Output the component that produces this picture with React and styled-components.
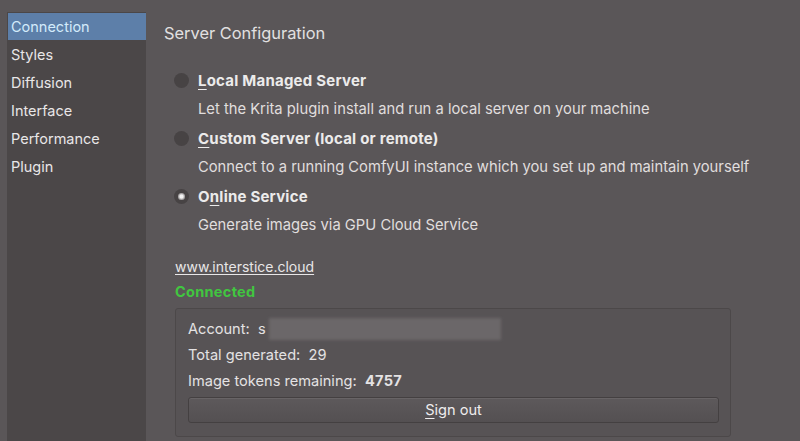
import React, { useState } from "react";
import styled, { createGlobalStyle } from "styled-components";

const GlobalStyle = createGlobalStyle`
  html, body {
    margin: 0;
    padding: 0;
    background: #5a5658;
  }
  body {
    font-family: "Inter", "Liberation Sans", sans-serif;
    color: #e4e2e3;
  }
`;

const Window = styled.div`
  width: 800px;
  height: 441px;
  display: flex;
  background: #5a5658;
  overflow: hidden;
`;

const Sidebar = styled.ul`
  list-style: none;
  margin: 12px 14px 0 7px;
  padding: 1px 0 0 1px;
  width: 138px;
  flex-shrink: 0;
  background: #4b4748;
`;

const NavItem = styled.li`
  height: 27px;
  margin-bottom: 1px;
  padding-left: 3px;
  display: flex;
  align-items: center;
  font-size: 14.5px;
  color: ${({ active }) => (active ? "#d3ebfb" : "#e8e6e7")};
  background: ${({ active }) => (active ? "#5d7fa9" : "transparent")};
`;

const Content = styled.div`
  flex: 1;
  padding: 23px 0 4px 4px;
  display: flex;
  flex-direction: column;
`;

const Title = styled.h2`
  margin: 0;
  font-size: 16.4px;
  font-weight: 400;
  line-height: 20px;
  color: #e2e0e1;
`;

const Options = styled.div`
  margin: 23px 0 0 10px;
  display: flex;
  flex-direction: column;
`;

const OptionRow = styled.label`
  display: flex;
  align-items: center;
  gap: 9px;
  height: 29px;
`;

const Radio = styled.span`
  width: 15px;
  height: 15px;
  border-radius: 50%;
  background: #474344;
  display: flex;
  align-items: center;
  justify-content: center;
  &::after {
    content: "";
    display: ${({ checked }) => (checked ? "block" : "none")};
    width: 7px;
    height: 7px;
    border-radius: 50%;
    background: radial-gradient(circle, #f2f2f2 0 30%, #a9a6a7 60%);
  }
`;

const OptionLabel = styled.span`
  font-size: 15px;
  font-weight: 700;
  letter-spacing: 0.22px;
  color: #ecebeb;
`;

const Mnemonic = styled.u`
  text-decoration-thickness: 1px;
  text-underline-offset: 3px;
`;

const Description = styled.div`
  height: 29px;
  line-height: 29px;
  padding-left: 24px;
  font-size: 14.75px;
  color: #e0dede;
`;

const Link = styled.a`
  margin: 18px 0 0 11px;
  font-size: 14px;
  line-height: 18px;
  color: #e8e6e7;
  text-decoration: underline;
  text-underline-offset: 2px;
  align-self: flex-start;
`;

const Status = styled.div`
  margin: 7px 0 0 11px;
  font-size: 14.5px;
  line-height: 18px;
  font-weight: 700;
  letter-spacing: 0.3px;
  color: #41c640;
`;

const GroupBox = styled.div`
  box-sizing: border-box;
  margin: 7px 0 0 11px;
  width: 556px;
  flex: 1;
  border: 1px solid #4c4849;
  border-radius: 3px;
  background: #575355;
  padding: 7px 12px 0 12px;
  display: flex;
  flex-direction: column;
`;

const InfoRow = styled.div`
  height: 26px;
  display: flex;
  align-items: center;
  font-size: 14.6px;
  color: #e4e2e3;
  white-space: pre;
`;

const Strong = styled.b`
  font-weight: 700;
  letter-spacing: 0.3px;
`;

const Redacted = styled.span`
  display: inline-block;
  width: 232px;
  height: 22px;
  margin-left: -1px;
  background: #6b6769;
  filter: blur(1.5px);
`;

const Button = styled.button`
  margin-top: 3px;
  width: 531px;
  height: 26px;
  border: 1px solid #444041;
  border-radius: 3px;
  background: linear-gradient(#5d595b, #545052);
  box-shadow: inset 0 1px 0 #686466;
  font-family: inherit;
  font-size: 14.6px;
  color: #eeeced;
  padding: 0;
`;

const navItems = ["Connection", "Styles", "Diffusion", "Interface", "Performance", "Plugin"];

export default function App() {
  const [server] = useState("online");

  return (
    <Window>
      <GlobalStyle />
      <Sidebar>
        {navItems.map((item, i) => (
          <NavItem key={item} active={i === 0}>
            {item}
          </NavItem>
        ))}
      </Sidebar>
      <Content>
        <Title>Server Configuration</Title>
        <Options>
          <OptionRow>
            <Radio checked={server === "local"} />
            <OptionLabel>
              <Mnemonic>L</Mnemonic>ocal Managed Server
            </OptionLabel>
          </OptionRow>
          <Description>Let the Krita plugin install and run a local server on your machine</Description>
          <OptionRow>
            <Radio checked={server === "custom"} />
            <OptionLabel>
              <Mnemonic>C</Mnemonic>ustom Server (local or remote)
            </OptionLabel>
          </OptionRow>
          <Description>Connect to a running ComfyUI instance which you set up and maintain yourself</Description>
          <OptionRow>
            <Radio checked={server === "online"} />
            <OptionLabel>
              O<Mnemonic>n</Mnemonic>line Service
            </OptionLabel>
          </OptionRow>
          <Description>Generate images via GPU Cloud Service</Description>
        </Options>
        <Link>www.interstice.cloud</Link>
        <Status>Connected</Status>
        <GroupBox>
          <InfoRow>
            Account:  s <Redacted />
          </InfoRow>
          <InfoRow>Total generated:  29</InfoRow>
          <InfoRow>
            Image tokens remaining:  <Strong>4757</Strong>
          </InfoRow>
          <Button>
            <Mnemonic>S</Mnemonic>ign out
          </Button>
        </GroupBox>
      </Content>
    </Window>
  );
}
